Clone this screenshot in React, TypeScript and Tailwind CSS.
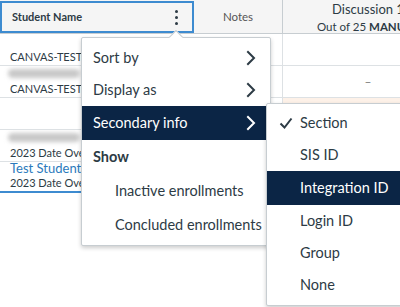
import React from 'react';

const Chevron = ({ className }: { className?: string }) => (
  <svg width="12" height="16" viewBox="0 0 12 16" className={className} fill="none">
    <path d="M3 2l6 6-6 6" stroke="currentColor" strokeWidth="2" strokeLinecap="square" />
  </svg>
);

const Check = () => (
  <svg width="14" height="12" viewBox="0 0 14 12" fill="none">
    <path d="M1.5 6.5l4 4 7-9" stroke="#2d3b45" strokeWidth="2" />
  </svg>
);

const rows = [
  { top: '', bottom: 'CANVAS-TEST', blur: false },
  { top: '', bottom: 'CANVAS-TEST', blur: true, dash: true },
  { top: '', bottom: '', blur: false },
  { top: '', bottom: '2023 Date Overdue', blur: true },
  { top: 'Test Student', bottom: '2023 Date Overdue', blur: false, last: true },
];

export default function App() {
  return (
    <div className="relative w-[400px] h-[307px] overflow-hidden bg-white font-['Lato','Noto_Sans',sans-serif] text-[#2d3b45]">
      {/* header */}
      <div className="flex h-[34px] bg-[#f5f5f5] border-b border-[#c7cdd1]">
        <div className="w-[194px] shrink-0 flex items-center justify-between pl-[10px] pr-[14px] border-2 border-[#3d8bd0] mt-[1px]">
          <span className="text-[11px] font-bold">Student Name</span>
          <div className="flex flex-col gap-[3px]">
            <span className="w-[3px] h-[3px] rounded-full bg-[#2d3b45]" />
            <span className="w-[3px] h-[3px] rounded-full bg-[#2d3b45]" />
            <span className="w-[3px] h-[3px] rounded-full bg-[#2d3b45]" />
          </div>
        </div>
        <div className="w-[89px] shrink-0 flex items-center justify-center border-r border-[#c7cdd1] text-[11.5px] text-[#555]">Notes</div>
        <div className="w-[170px] shrink-0 flex flex-col items-center justify-center pt-[3px] leading-[17px] whitespace-nowrap">
          <span className="text-[13px]">Discussion 1</span>
          <span className="text-[11.5px]">Out of 25 <b className="font-bold">MANUAL</b></span>
        </div>
      </div>

      {/* rows */}
      {rows.map((r, i) => (
        <div key={i} className={`flex h-[32px] border-b ${r.last ? 'border-transparent' : 'border-[#dde1e4]'}`}>
          <div className={`w-[194px] shrink-0 relative flex flex-col justify-end pl-[10px] pb-[1px] text-[11px] leading-[14px] whitespace-nowrap overflow-hidden ${r.last ? 'border-b-2 border-[#3d8bd0]' : ''}`}>
            {r.blur && <div className="absolute left-[8px] top-[3px] w-[72px] h-[9px] rounded-full bg-[#c8c8c8] blur-[2px]" />}
            {r.top && <span className="text-[13px] leading-[15px] text-[#2b7abc]">{r.top}</span>}
            <span>{r.bottom}</span>
          </div>
          <div className="w-[89px] shrink-0 border-r border-[#dde1e4]" />
          <div className={`w-[170px] shrink-0 flex items-center justify-center text-[12px] text-[#777] ${i === 2 ? 'bg-[#fdf1e8]' : ''}`}>
            {r.dash ? '–' : ''}
          </div>
        </div>
      ))}

      {/* caret */}
      <div className="absolute left-[171px] top-[32px] w-[10px] h-[10px] rotate-45 bg-white border-l border-t border-[#c7cdd1] z-20" />

      {/* main menu */}
      <div className="absolute left-[81px] top-[37px] w-[190px] bg-white border border-[#c7cdd1] shadow-[0_2px_4px_rgba(0,0,0,0.2)] rounded-[2px] py-[4px] text-[14.5px] z-10">
        <div className="flex items-center justify-between h-[32px] pl-[11px] pr-[13px]">
          <span>Sort by</span>
          <Chevron />
        </div>
        <div className="flex items-center justify-between h-[32px] pl-[11px] pr-[13px]">
          <span>Display as</span>
          <Chevron />
        </div>
        <div className="flex items-center justify-between h-[34px] pl-[11px] pr-[13px] bg-[#0b2545] text-white">
          <span>Secondary info</span>
          <Chevron />
        </div>
        <div className="flex items-center h-[34px] pl-[11px] font-bold">Show</div>
        <div className="flex items-center h-[34px] pl-[33px]">Inactive enrollments</div>
        <div className="flex items-center h-[33px] pl-[33px]">Concluded enrollments</div>
      </div>

      {/* secondary submenu */}
      <div className="absolute left-[266px] top-[103px] w-[140px] bg-white border border-[#c7cdd1] shadow-[0_2px_4px_rgba(0,0,0,0.2)] rounded-[2px] pt-[3px] pb-[4px] text-[14.5px] z-30">
        <div className="flex items-center h-[32px] pl-[12px] gap-[7px]">
          <Check />
          <span>Section</span>
        </div>
        <div className="flex items-center h-[32px] pl-[33px]">SIS ID</div>
        <div className="flex items-center h-[34px] pl-[33px] bg-[#0b2545] text-white">Integration ID</div>
        <div className="flex items-center h-[32px] pl-[33px]">Login ID</div>
        <div className="flex items-center h-[32px] pl-[33px]">Group</div>
        <div className="flex items-center h-[32px] pl-[33px]">None</div>
      </div>
    </div>
  );
}
